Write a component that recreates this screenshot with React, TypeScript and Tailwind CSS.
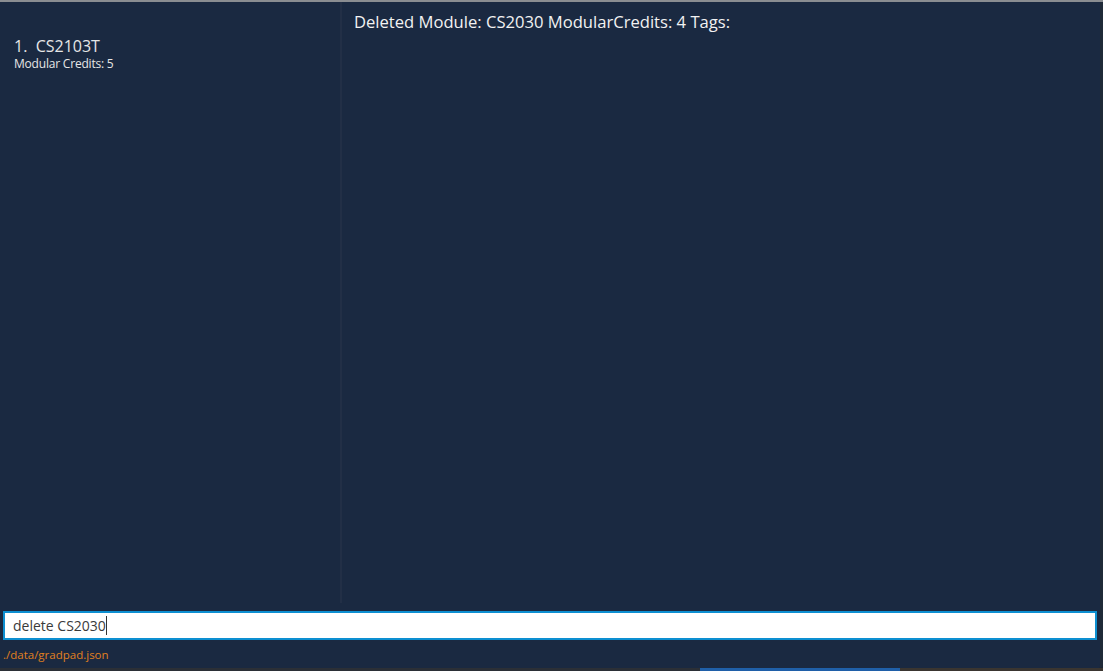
export default function App() {
  return (
    <div
      className="w-[1103px] h-[671px] overflow-hidden bg-[#1c2633] flex flex-col"
      style={{ fontFamily: '"Open Sans", "Noto Sans", sans-serif' }}
    >
      <div className="h-[2px] bg-[#8a8d91]" />
      <div className="flex-1 flex flex-col bg-[#1a2941] border-r-[3px] border-[#1f2a38] rounded-br-[4px]">
        {/* Main panes */}
        <div className="flex h-[601px]">
          <div className="w-[340px] pl-[14px] pt-[34px]">
            <div className="text-[16px] leading-[21px] text-[#e6e6e6]">
              1.&nbsp;&nbsp;CS2103T
            </div>
            <div className="text-[12px] leading-[14px] text-[#e6e6e6] tracking-[-0.2px]">
              Modular Credits: 5
            </div>
          </div>
          <div className="w-[2px] bg-[#222f46]" />
          <div className="flex-1 pl-[12px] pt-[8px]">
            <div className="text-[16.6px] leading-[23px] text-[#f2f2f2]">
              Deleted Module: CS2030 ModularCredits: 4 Tags:
            </div>
          </div>
        </div>

        {/* Command box */}
        <div className="px-[3px] pt-[8px]">
          <div className="h-[29px] bg-white border-2 border-[#0d8fd1] flex items-center pl-[8px]">
            <span className="text-[14px] text-[#3a3a3a]">delete CS2030</span>
            <span className="w-[1px] h-[19px] bg-[#333]" />
          </div>
        </div>

        {/* Status bar */}
        <div className="px-[3px] pt-[7px] text-[11.5px] leading-[16px] text-[#e0801f]">
          ./data/gradpad.json
        </div>
      </div>
      <div className="h-[3px] flex">
        <div className="w-[700px] bg-[#2b2f36]" />
        <div className="w-[200px] bg-[#1f5fa8]" />
        <div className="flex-1 bg-[#3a3530]" />
      </div>
    </div>
  )
}
